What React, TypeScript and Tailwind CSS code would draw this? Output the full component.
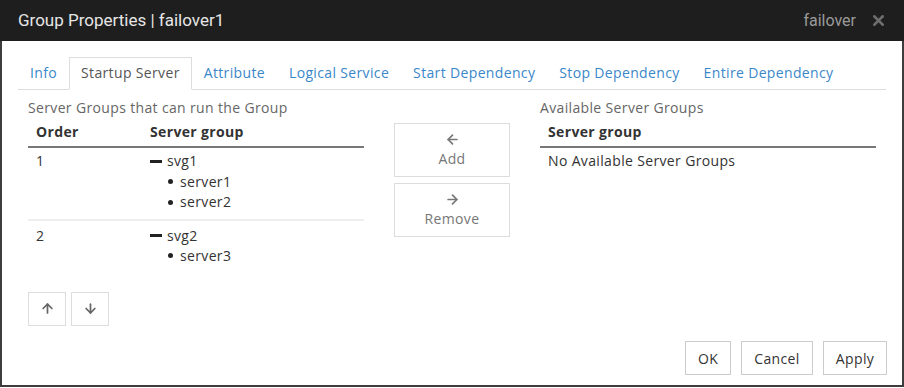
import React from 'react';
import { ArrowLeft, ArrowRight, ArrowUp, ArrowDown, X } from 'lucide-react';

const tabs = [
  'Info',
  'Startup Server',
  'Attribute',
  'Logical Service',
  'Start Dependency',
  'Stop Dependency',
  'Entire Dependency',
];

const rows = [
  { order: 1, group: 'svg1', servers: ['server1', 'server2'] },
  { order: 2, group: 'svg2', servers: ['server3'] },
];

const App: React.FC = () => {
  return (
    <div
      className="w-[904px] h-[388px] bg-white text-[14px] tracking-[0.35px] text-[#333]"
      style={{ fontFamily: '"Open Sans", "Noto Sans", sans-serif' }}
    >
      <div className="flex flex-col h-[387px] border-x-2 border-b-2 border-[#3d3d3d]">
        {/* title bar */}
        <div className="flex items-center justify-between h-[41px] bg-[#1e1e1e] pl-[18px] pr-[17px] -mx-[2px] tracking-normal">
          <span
            className="text-[17px] text-[#e6e6e6]"
            style={{ fontFamily: 'Roboto, "Liberation Sans", sans-serif' }}
          >
            Group Properties | failover1
          </span>
          <div className="flex items-center gap-[14px]">
            <span
              className="text-[16px] text-[#9a9a9a]"
              style={{ fontFamily: 'Roboto, "Liberation Sans", sans-serif' }}
            >
              failover
            </span>
            <X size={17} strokeWidth={3.5} className="text-[#6e6e6e]" />
          </div>
        </div>

        {/* tabs */}
        <ul className="flex mt-[16px] ml-[16px] mr-[16px] border-b border-[#ddd]">
          {tabs.map((tab, index) => (
            <li
              key={index}
              className={
                index === 1
                  ? 'px-[11px] py-[5px] leading-[20px] border border-[#ddd] border-b-white -mb-px text-[#555] bg-white'
                  : 'px-[11px] py-[5px] leading-[20px] border border-transparent text-[#3a87c9]'
              }
            >
              {tab}
            </li>
          ))}
        </ul>

        {/* content */}
        <div className="flex flex-1 px-[26px] pt-[8px] gap-[30px]">
          <div className="w-[336px]">
            <div className="leading-[20px] text-[#666]">Server Groups that can run the Group</div>
            <div className="flex mt-[4px] pb-[4px] font-bold leading-[20px] border-b-2 border-[#777]">
              <div className="w-[114px] pl-[8px]">Order</div>
              <div className="pl-[8px]">Server group</div>
            </div>
            {rows.map((row, index) => (
              <div
                key={row.order}
                className={
                  index === 0
                    ? 'flex pt-[3px] pb-[6px] leading-[20.5px] border-b-2 border-[#eee]'
                    : 'flex pt-[5px] pb-[6px] leading-[20px]'
                }
              >
                <div className="w-[114px] pl-[8px]">{row.order}</div>
                <div className="pl-[8px]">
                  <div className="flex items-center">
                    <span className="inline-block w-[12px] h-[3px] bg-[#222] mr-[5px]"></span>
                    {row.group}
                  </div>
                  {row.servers.map((s) => (
                    <div key={s} className="flex items-center pl-[18px]">
                      <span className="inline-block w-[5px] h-[5px] rounded-full bg-[#222] mr-[7px]"></span>
                      {s}
                    </div>
                  ))}
                </div>
              </div>
            ))}
            <div className="flex gap-[5px] mt-[20px]">
              <button className="flex items-center justify-center w-[38px] h-[34px] border border-[#ddd] text-[#666]">
                <ArrowUp size={15} strokeWidth={2.75} />
              </button>
              <button className="flex items-center justify-center w-[38px] h-[34px] border border-[#ddd] text-[#666]">
                <ArrowDown size={15} strokeWidth={2.75} />
              </button>
            </div>
          </div>

          <div className="flex flex-col gap-[6px] w-[116px] pt-[25px]">
            <button className="flex flex-col items-center justify-center h-[54px] border border-[#ddd] text-[#777] leading-[20px]">
              <ArrowLeft size={15} strokeWidth={2.75} className="mb-[2px]" />
              Add
            </button>
            <button className="flex flex-col items-center justify-center h-[54px] border border-[#ddd] text-[#777] leading-[20px]">
              <ArrowRight size={15} strokeWidth={2.75} className="mb-[2px]" />
              Remove
            </button>
          </div>

          <div className="w-[336px]">
            <div className="leading-[20px] text-[#666]">Available Server Groups</div>
            <div className="mt-[4px] pb-[4px] pl-[8px] font-bold leading-[20px] border-b-2 border-[#777]">
              Server group
            </div>
            <div className="pl-[8px] pt-[3px] leading-[20px]">No Available Server Groups</div>
          </div>
        </div>

        {/* footer */}
        <div className="flex justify-end gap-[10px] pr-[15px] pb-[10px]">
          <button className="h-[34px] w-[46px] border border-[#ccc] text-[#333]">OK</button>
          <button className="h-[34px] w-[72px] border border-[#ccc] text-[#333]">Cancel</button>
          <button className="h-[34px] w-[64px] border border-[#ccc] text-[#333]">Apply</button>
        </div>
      </div>
    </div>
  );
};

export default App;
